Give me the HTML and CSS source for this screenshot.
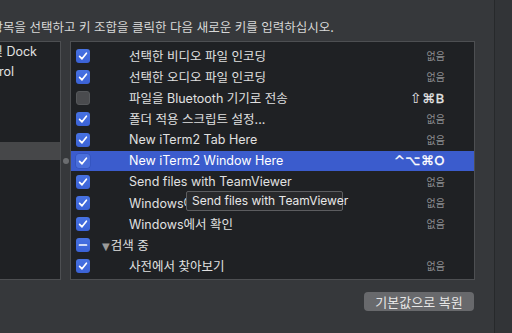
FILE: index.html
```html
<!DOCTYPE html>
<html lang="ko">
<head>
<meta charset="utf-8">
<link rel="stylesheet" href="styles.css">
</head>
<body>
<div class="window">
  <div class="main">
    <p class="hint">단축키를 변경하려면 항목을 선택하고 키 조합을 클릭한 다음 새로운 키를 입력하십시오.</p>
    <div class="panels">
      <ul class="sidebar">
        <li>Launchpad 및 Dock</li>
        <li>Mission Control</li>
        <li>키보드</li>
        <li>입력 소스</li>
        <li>스크린샷</li>
        <li class="active">서비스</li>
        <li>Spotlight</li>
        <li>손쉬운 사용</li>
        <li>앱 단축키</li>
      </ul>
      <div class="splitter"><span class="dot"></span></div>
      <div class="list">
        <div class="row"><span class="cb on"><svg viewBox="0 0 14 14"><path d="M3.6 7.4 6 9.8 10.4 4.2"/></svg></span><span class="label">선택한 비디오 파일 인코딩</span><span class="none">없음</span></div>
        <div class="row"><span class="cb on"><svg viewBox="0 0 14 14"><path d="M3.6 7.4 6 9.8 10.4 4.2"/></svg></span><span class="label">선택한 오디오 파일 인코딩</span><span class="none">없음</span></div>
        <div class="row"><span class="cb off"></span><span class="label">파일을 Bluetooth 기기로 전송</span><span class="keys"><span class="shift">⇧</span>⌘B</span></div>
        <div class="row"><span class="cb on"><svg viewBox="0 0 14 14"><path d="M3.6 7.4 6 9.8 10.4 4.2"/></svg></span><span class="label">폴더 적용 스크립트 설정...</span><span class="none">없음</span></div>
        <div class="row"><span class="cb on"><svg viewBox="0 0 14 14"><path d="M3.6 7.4 6 9.8 10.4 4.2"/></svg></span><span class="label">New iTerm2 Tab Here</span><span class="none">없음</span></div>
        <div class="row selected"><span class="cb on"><svg viewBox="0 0 14 14"><path d="M3.6 7.4 6 9.8 10.4 4.2"/></svg></span><span class="label">New iTerm2 Window Here</span><span class="keys">^⌥⌘O</span></div>
        <div class="row"><span class="cb on"><svg viewBox="0 0 14 14"><path d="M3.6 7.4 6 9.8 10.4 4.2"/></svg></span><span class="label">Send files with TeamViewer</span><span class="none">없음</span></div>
        <div class="row"><span class="cb on"><svg viewBox="0 0 14 14"><path d="M3.6 7.4 6 9.8 10.4 4.2"/></svg></span><span class="label">Windows에서 열기</span><span class="none">없음</span></div>
        <div class="row"><span class="cb on"><svg viewBox="0 0 14 14"><path d="M3.6 7.4 6 9.8 10.4 4.2"/></svg></span><span class="label">Windows에서 확인</span><span class="none">없음</span></div>
        <div class="row group"><span class="cb on"><svg viewBox="0 0 14 14"><path d="M3.5 7h7"/></svg></span><span class="label"><span class="tri">▼</span>검색 중</span></div>
        <div class="row"><span class="cb on"><svg viewBox="0 0 14 14"><path d="M3.6 7.4 6 9.8 10.4 4.2"/></svg></span><span class="label">사전에서 찾아보기</span><span class="none">없음</span></div>
        <div class="tooltip">Send files with TeamViewer</div>
      </div>
    </div>
    <div class="actions"><button class="btn">기본값으로 복원</button></div>
  </div>
  <div class="edge"></div>
</div>
</body>
</html>
```

FILE: styles.css
```css
* { box-sizing: border-box; }
html, body { margin: 0; padding: 0; }
body {
  width: 512px;
  height: 333px;
  overflow: hidden;
  background: #36383b;
  font-family: "Inter", "Noto Sans CJK KR", sans-serif;
  font-size: 12.5px;
  color: #dedede;
}
.window { display: flex; height: 333px; }
.main {
  width: 495px;
  flex: none;
  border-right: 1px solid #27292b;
  display: flex;
  flex-direction: column;
}
.edge { flex: 1; background: #323437; }
.hint {
  margin: 0 0 0 -119px;
  padding-top: 19px;
  height: 41px;
  line-height: 17px;
  white-space: nowrap;
  color: #d8d8d8;
}
.panels {
  display: flex;
  height: 239px;
}
.sidebar {
  list-style: none;
  margin: 0 0 0 -92px;
  padding: 0;
  width: 153px;
  flex: none;
  background: #1f2124;
  border: 1px solid #4d4f52;
  border-left: none;
  overflow: hidden;
}
.sidebar li {
  height: 20px;
  line-height: 20px;
  padding-left: 14px;
  white-space: nowrap;
  color: #e2e2e2;
}
.sidebar li.active { background: #464749; box-shadow: inset 0 -2px 0 #1f2124; }
.splitter {
  width: 9px;
  flex: none;
  display: flex;
  align-items: center;
  justify-content: center;
}
.dot {
  width: 6px; height: 6px;
  border-radius: 50%;
  background: #6b6d70;
}
.list {
  position: relative;
  width: 405px;
  flex: none;
  background: #1f2124;
  border: 1px solid #4d4f52;
  padding-top: 3px;
  overflow: visible;
}
.row {
  height: 21px;
  display: flex;
  align-items: center;
  padding: 0 29px 0 5px;
}
.row.selected { background: #3b5ccd; box-shadow: inset 0 1px 0 #1f2124; }
.cb {
  width: 14px; height: 14px;
  flex: none;
  border-radius: 3px;
  display: flex;
}
.cb.on { background: linear-gradient(#4772e2, #3b62d6); }
.cb.off { background: #4a4b4e; border: 1px solid #56585b; }
.row.selected .cb.on { background: #4a6fdb; box-shadow: 0 0 0 0.5px #2f4fb5; }
.cb svg { width: 14px; height: 14px; }
.cb path { fill: none; stroke: #fff; stroke-width: 1.7; stroke-linecap: round; stroke-linejoin: round; }
.label {
  margin-left: 39px;
  flex: 1;
  white-space: nowrap;
  color: #e0e0e0;
}
.group .label { margin-left: 12px; }
.tri { font-size: 10px; color: #9a9a9a; margin-right: 1px; font-family: "DejaVu Sans", sans-serif; }
.none {
  font-size: 10px;
  color: #8c8d90;
}
.keys {
  font-family: "DejaVu Sans", sans-serif;
  font-size: 13px;
  color: #e4e4e4;
  letter-spacing: 0.5px;
  -webkit-text-stroke: 0.3px currentColor;
}
.shift { -webkit-text-stroke: 0; font-size: 14px; }
.row.selected .label, .row.selected .keys { color: #fff; }
.tooltip {
  position: absolute;
  left: 115px;
  top: 149px;
  width: 157px;
  height: 20px;
  line-height: 18px;
  padding-left: 5px;
  font-size: 12px;
  color: #e8e8e8;
  background: #28292b;
  border: 1px solid #5c5d60;
  border-radius: 2px;
  white-space: nowrap;
}
.actions {
  display: flex;
  justify-content: flex-end;
  padding: 12px 20px 0 0;
}
.btn {
  width: 110px;
  height: 19px;
  border: none;
  border-radius: 4px;
  background: #68696c;
  color: #e6e6e6;
  font-family: "Noto Sans CJK KR", sans-serif;
  font-size: 13px;
  line-height: 19px;
  padding: 0;
}
```
